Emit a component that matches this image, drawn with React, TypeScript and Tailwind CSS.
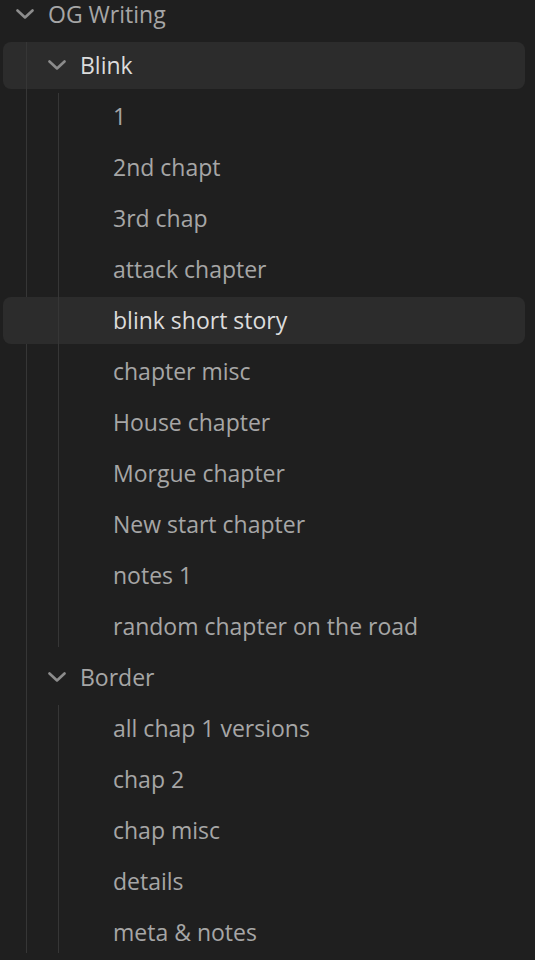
import React from "react";

type Item = { name: string; active?: boolean };

const blinkFiles: Item[] = [
  { name: "1" },
  { name: "2nd chapt" },
  { name: "3rd chap" },
  { name: "attack chapter" },
  { name: "blink short story", active: true },
  { name: "chapter misc" },
  { name: "House chapter" },
  { name: "Morgue chapter" },
  { name: "New start chapter" },
  { name: "notes 1" },
  { name: "random chapter on the road" },
];

const borderFiles: Item[] = [
  { name: "all chap 1 versions" },
  { name: "chap 2" },
  { name: "chap misc" },
  { name: "details" },
  { name: "meta & notes" },
];

function Chevron() {
  return (
    <svg width="18" height="10" viewBox="0 0 18 10" className="shrink-0" fill="none">
      <polyline
        points="1.5,1.5 9,8.5 16.5,1.5"
        stroke="#8c8c8c"
        strokeWidth="2.6"
        strokeLinecap="round"
        strokeLinejoin="round"
      />
    </svg>
  );
}

function FolderRow({ name, depth, active }: { name: string; depth: number; active?: boolean }) {
  return (
    <div
      className={`flex items-center h-[47px] mb-[4px] pb-[1px] rounded-lg ${
        active ? "bg-[#2c2c2c] text-[#dcdcdc]" : "text-[#a6a6a6]"
      }`}
      style={{ paddingLeft: 13 + depth * 32 }}
    >
      <Chevron />
      <span className="ml-[14px]">{name}</span>
    </div>
  );
}

function FileRow({ item }: { item: Item }) {
  return (
    <div
      className={`flex items-center h-[47px] mb-[4px] pb-[1px] rounded-lg pl-[110px] ${
        item.active ? "bg-[#2c2c2c] text-[#dcdcdc]" : "text-[#a6a6a6]"
      }`}
    >
      {item.name}
    </div>
  );
}

function Children({ line, children }: { line: number; children: React.ReactNode }) {
  return (
    <div className="relative">
      <div className="absolute top-0 bottom-[3px] w-px bg-[#363636]" style={{ left: line }} />
      {children}
    </div>
  );
}

export default function App() {
  return (
    <div
      className="h-[960px] overflow-hidden bg-[#1f1f1f] text-[23px] leading-none"
      style={{ fontFamily: '"Open Sans", "Noto Sans", sans-serif' }}
    >
      <div className="mt-[-9px] pl-[3px] pr-[10px]">
        <FolderRow name="OG Writing" depth={0} />
        <Children line={23}>
          <FolderRow name="Blink" depth={1} active />
          <Children line={55}>
            {blinkFiles.map((f) => (
              <FileRow key={f.name} item={f} />
            ))}
          </Children>
          <FolderRow name="Border" depth={1} />
          <Children line={55}>
            {borderFiles.map((f) => (
              <FileRow key={f.name} item={f} />
            ))}
          </Children>
        </Children>
      </div>
    </div>
  );
}
